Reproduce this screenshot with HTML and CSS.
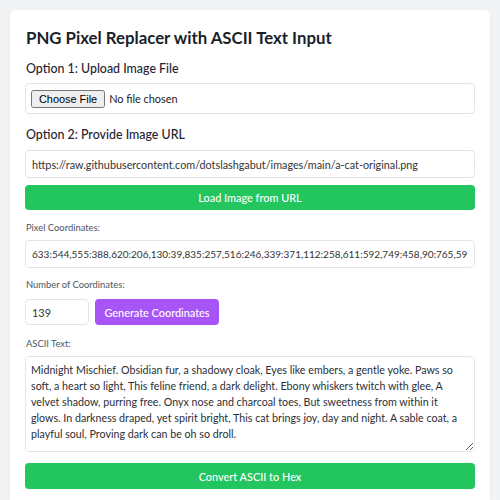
FILE: index.html
```html
<!DOCTYPE html>
<html>
<head>
<meta charset="utf-8">
<link rel="stylesheet" href="styles.css">
</head>
<body>
<div class="card">
  <h1 class="title">PNG Pixel Replacer with ASCII Text Input</h1>
  <h2 class="option opt1">Option 1: Upload Image File</h2>
  <div class="filebox"><input class="file" type="file"></div>
  <h2 class="option opt2">Option 2: Provide Image URL</h2>
  <input class="field url" type="text" value="https://raw.githubusercontent.com/dotslashgabut/images/main/a-cat-original.png">
  <button class="btn green load">Load Image from URL</button>
  <label class="lbl lbl-pixel">Pixel Coordinates:</label>
  <input class="field coords" type="text" value="633:544,555:388,620:206,130:39,835:257,516:246,339:371,112:258,611:592,749:458,90:765,59:322,401:77">
  <label class="lbl lbl-num">Number of Coordinates:</label>
  <div class="row">
    <input class="field num" type="text" value="139">
    <button class="btn purple gen">Generate Coordinates</button>
  </div>
  <label class="lbl lbl-ascii">ASCII Text:</label>
  <textarea class="field text">Midnight Mischief. Obsidian fur, a shadowy cloak, Eyes like embers, a gentle yoke. Paws so soft, a heart so light, This feline friend, a dark delight. Ebony whiskers twitch with glee, A velvet shadow, purring free. Onyx nose and charcoal toes, But sweetness from within it glows. In darkness draped, yet spirit bright, This cat brings joy, day and night. A sable coat, a playful soul, Proving dark can be oh so droll.</textarea>
  <button class="btn green convert">Convert ASCII to Hex</button>
</div>
</body>
</html>
```
FILE: styles.css
```css
html, body {
  margin: 0;
  padding: 0;
  background: #f2f3f5;
  font-family: "Lato", sans-serif;
  color: #1f2937;
  overflow: hidden;
}
body {
  padding: 10px 10px 0;
  height: 500px;
  box-sizing: border-box;
}
.card {
  background: #fff;
  border-radius: 6px 6px 0 0;
  padding: 16px 15px 0 15px;
  box-shadow: 0 1px 3px rgba(0,0,0,0.06);
  display: flex;
  flex-direction: column;
  height: 490px;
  box-sizing: border-box;
}
.title {
  font-size: 16.8px;
  font-weight: 700;
  line-height: 24px;
  margin: 0 0 0 1px;
  color: #1a1f2b;
}
.option {
  font-size: 12.4px;
  font-weight: 500;
  line-height: 20px;
  margin: 0 0 4px 1px;
  color: #1f2430;
}
.opt1 { margin-top: 9px; }
.opt2 { margin-top: 11px; margin-bottom: 5px; }
.filebox {
  border: 1px solid #e3e5e8;
  border-radius: 4px;
  height: 31px;
  box-sizing: border-box;
  display: flex;
  align-items: center;
  padding: 0 5px;
}
.file {
  font-family: "Lato", sans-serif;
  font-size: 10.9px;
  color: #222;
}
.field {
  display: block;
  width: 100%;
  box-sizing: border-box;
  border: 1px solid #e3e5e8;
  border-radius: 4px;
  font-family: "Lato", sans-serif;
  font-size: 10.8px;
  color: #333;
  padding: 0 6px;
  outline: none;
  background: #fff;
}
.url { height: 28px; }
.btn {
  border: none;
  border-radius: 4px;
  color: #fff;
  font-family: "Lato", sans-serif;
  font-size: 10.9px;
  font-weight: 500;
  cursor: pointer;
  padding: 0;
}
.green { background: #22c55e; }
.purple { background: #a855f7; }
.load { height: 25px; margin-top: 7px; width: 100%; }
.lbl {
  display: block;
  font-size: 9.4px;
  line-height: 16px;
  color: #4b5563;
  margin-left: 1px;
}
.lbl-pixel { margin-top: 10px; margin-bottom: 4px; }
.coords { height: 28px; font-size: 10px; }
.lbl-num { margin-top: 9px; margin-bottom: 6px; }
.row {
  display: flex;
  gap: 6px;
  height: 26px;
}
.num { width: 64px; height: 26px; padding: 0 6px; font-size: 10.9px; }
.gen { width: 124px; height: 26px; flex: none; }
.lbl-ascii { margin-top: 11px; margin-bottom: 4px; }
.text {
  height: 96px;
  padding: 5px 7px 5px 5px;
  font-size: 10.7px;
  line-height: 16px;
  resize: vertical;
  color: #2b2f36;
}
.convert { height: 26px; margin-top: 11px; width: 100%; }
```
